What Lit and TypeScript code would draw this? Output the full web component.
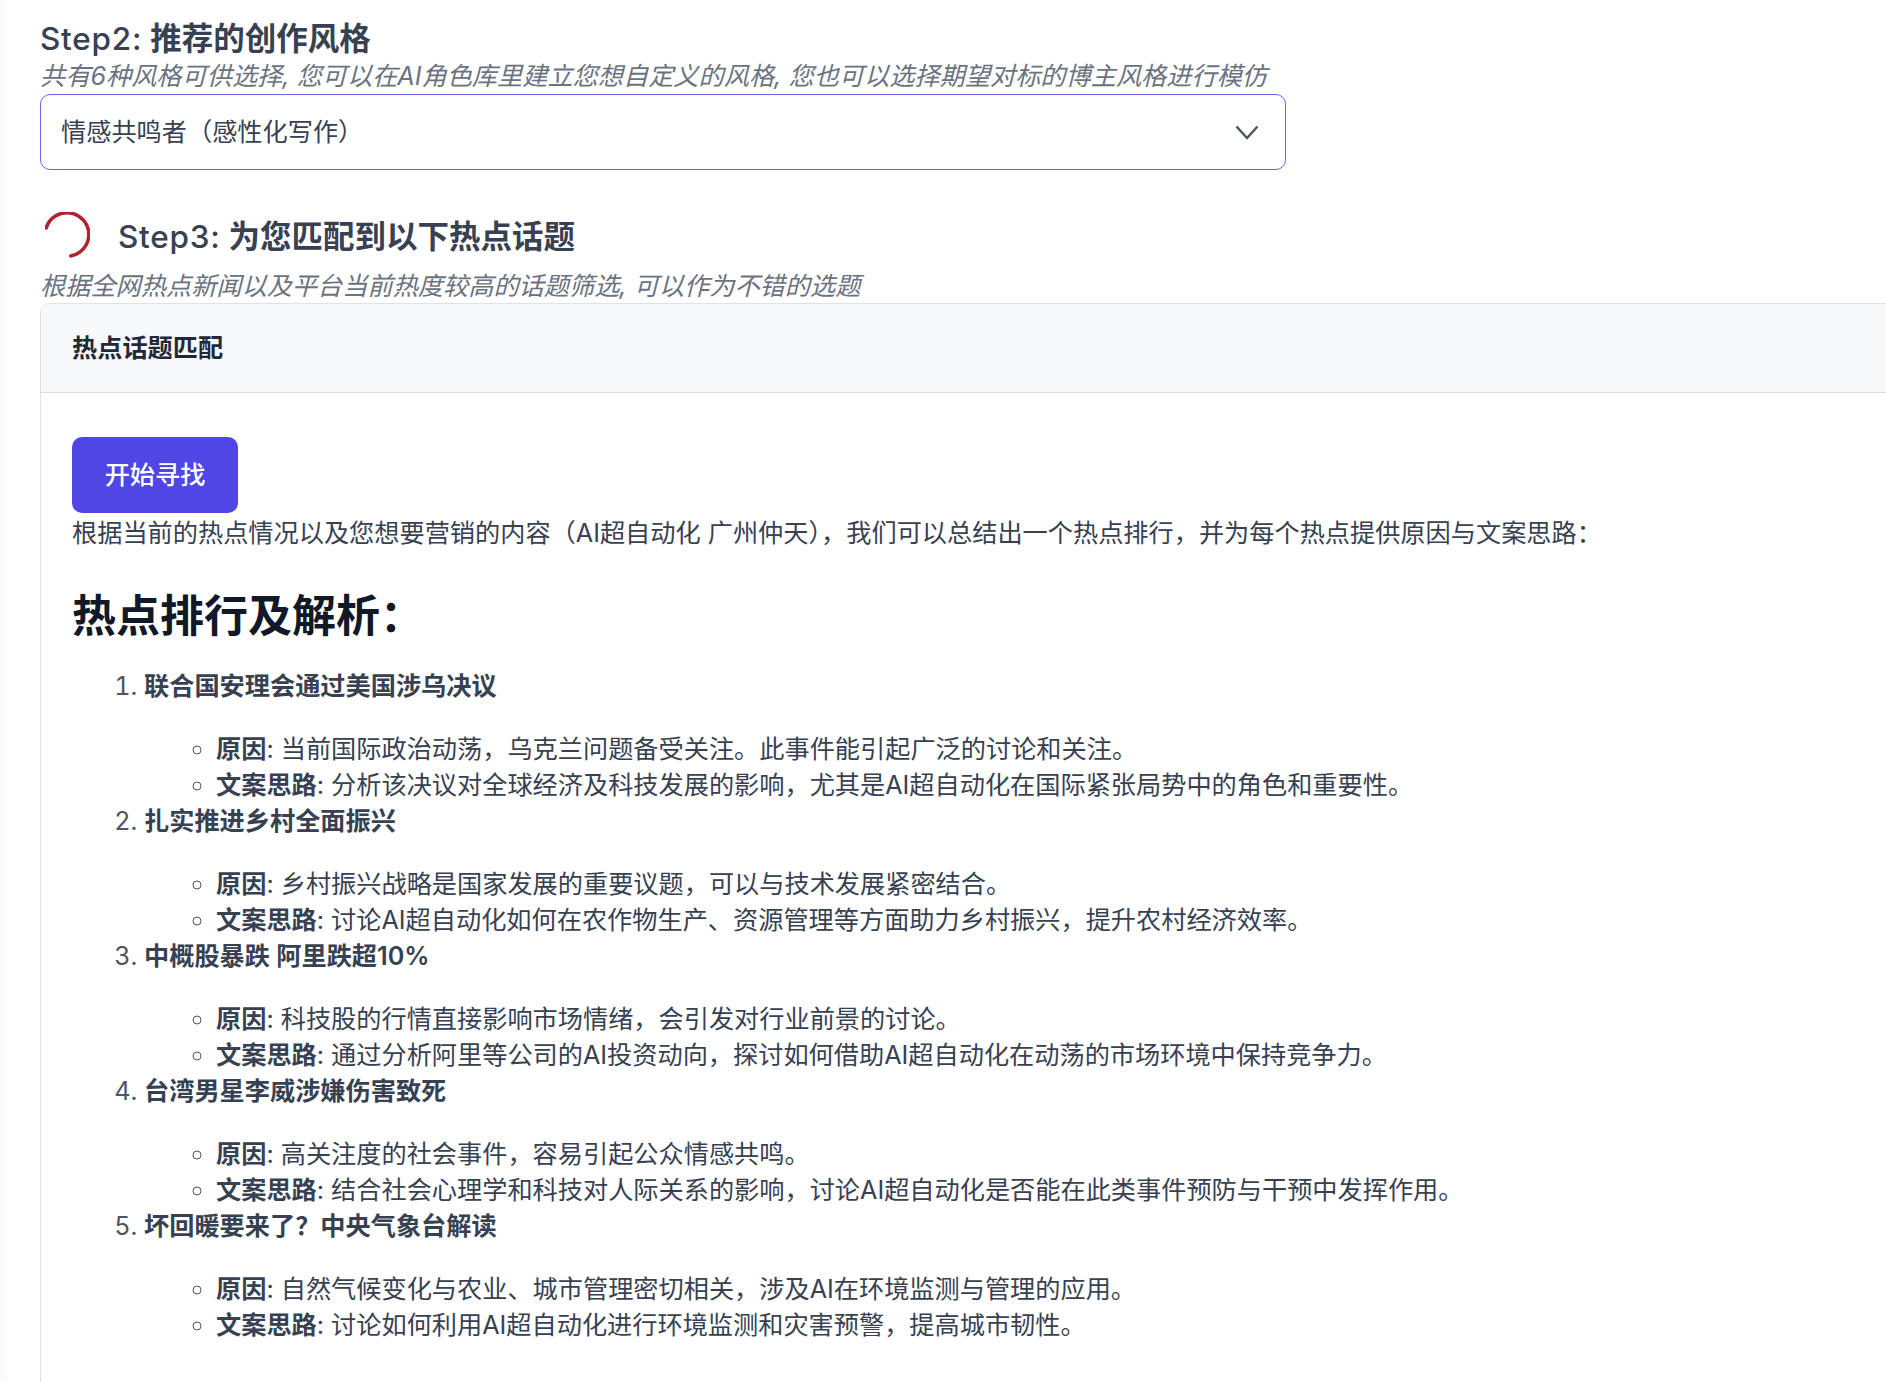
import { LitElement, html, css } from "lit";
import { customElement } from "lit/decorators.js";

const topics = [
  {
    title: "联合国安理会通过美国涉乌决议",
    reason: "当前国际政治动荡，乌克兰问题备受关注。此事件能引起广泛的讨论和关注。",
    idea: "分析该决议对全球经济及科技发展的影响，尤其是AI超自动化在国际紧张局势中的角色和重要性。",
  },
  {
    title: "扎实推进乡村全面振兴",
    reason: "乡村振兴战略是国家发展的重要议题，可以与技术发展紧密结合。",
    idea: "讨论AI超自动化如何在农作物生产、资源管理等方面助力乡村振兴，提升农村经济效率。",
  },
  {
    title: "中概股暴跌 阿里跌超10%",
    reason: "科技股的行情直接影响市场情绪，会引发对行业前景的讨论。",
    idea: "通过分析阿里等公司的AI投资动向，探讨如何借助AI超自动化在动荡的市场环境中保持竞争力。",
  },
  {
    title: "台湾男星李威涉嫌伤害致死",
    reason: "高关注度的社会事件，容易引起公众情感共鸣。",
    idea: "结合社会心理学和科技对人际关系的影响，讨论AI超自动化是否能在此类事件预防与干预中发挥作用。",
  },
  {
    title: "坏回暖要来了？中央气象台解读",
    reason: "自然气候变化与农业、城市管理密切相关，涉及AI在环境监测与管理的应用。",
    idea: "讨论如何利用AI超自动化进行环境监测和灾害预警，提高城市韧性。",
  },
];

@customElement("app-root")
export class AppRoot extends LitElement {
  static styles = css`
    :host {
      display: block;
      height: 1382px;
      overflow: hidden;
      background: linear-gradient(to right, #fcfcfc 7px, #fff 7px);
      font-family: Inter, "Noto Sans CJK SC", sans-serif;
      font-size: 25.2px;
      line-height: 36px;
      color: #374151;
    }
    .page {
      padding: 18px 0 0 40px;
    }
    .step-title {
      margin: 0;
      font-size: 31.5px;
      line-height: 42px;
      font-weight: 600;
      color: #374151;
    }
    .step-title span {
      font-weight: 500;
      letter-spacing: 0.75px;
    }
    .hint {
      margin: -2px 0 0;
      font-style: italic;
      color: #6b7280;
    }
    .select {
      width: 1246px;
      height: 76px;
      box-sizing: border-box;
      border: 1px solid #6366f1;
      border-radius: 10px;
      padding: 0 26px 0 20px;
      display: flex;
      align-items: center;
      justify-content: space-between;
    }
    .step3 {
      margin-top: 42px;
      display: flex;
      align-items: flex-start;
      gap: 28px;
      padding-left: 5px;
    }
    .step3 .step-title {
      margin-top: 4px;
    }
    .spinner {
      width: 45px;
      height: 46px;
      display: block;
    }
    .step3 + .hint {
      margin-top: 10px;
    }
    .card {
      width: 1900px;
      height: 1100px;
      margin-top: -1px;
      border: 1px solid #e0e2e7;
      border-radius: 10px 0 0 0;
    }
    .card-head {
      height: 88px;
      padding-left: 31px;
      display: flex;
      align-items: center;
      background: #f7f8fa;
      border-bottom: 1px solid #d9dce1;
      border-radius: 10px 0 0 0;
      font-weight: 600;
      color: #1f2937;
    }
    .card-body {
      padding: 44px 0 0 31px;
    }
    button {
      display: block;
      width: 166px;
      height: 76px;
      border: 0;
      border-radius: 10px;
      background: #4f46e5;
      color: #fff;
      font: inherit;
      font-weight: 500;
    }
    .intro {
      margin: 2px 0 0;
    }
    h2 {
      margin: 35px 0 0;
      font-size: 44px;
      line-height: 60px;
      font-weight: 600;
      color: #111827;
    }
    ol {
      margin: 22px 0 0;
      padding-left: 72px;
    }
    ul {
      margin: 27px 0 0;
      padding-left: 72px;
      list-style: circle;
    }
    li::marker {
      color: #4b5563;
    }
    strong {
      font-weight: 600;
    }
  `;

  render() {
    return html`
      <div class="page">
        <h3 class="step-title"><span>Step2:</span> 推荐的创作风格</h3>
        <p class="hint">共有6种风格可供选择, 您可以在AI角色库里建立您想自定义的风格, 您也可以选择期望对标的博主风格进行模仿</p>
        <div class="select">
          <span>情感共鸣者（感性化写作）</span>
          <svg width="24" height="24" viewBox="0 0 24 24" fill="none" stroke="#4b5563" stroke-width="2.5">
            <path d="M1.500 6.500L12 18L22.500 6.500" />
          </svg>
        </div>
        <div class="step3">
          <svg class="spinner" viewBox="0 0 45 46" fill="none" stroke="#b3202f" stroke-width="3.500" stroke-linecap="round">
            <path d="M1.200 16A21.800 21.800 0 1 1 25.700 44" />
          </svg>
          <h3 class="step-title"><span>Step3:</span> 为您匹配到以下热点话题</h3>
        </div>
        <p class="hint">根据全网热点新闻以及平台当前热度较高的话题筛选, 可以作为不错的选题</p>
        <div class="card">
          <div class="card-head">热点话题匹配</div>
          <div class="card-body">
            <button>开始寻找</button>
            <p class="intro">根据当前的热点情况以及您想要营销的内容（AI超自动化 广州仲天），我们可以总结出一个热点排行，并为每个热点提供原因与文案思路：</p>
            <h2>热点排行及解析：</h2>
            <ol>
              ${topics.map(
                (t) => html`<li>
                  <strong>${t.title}</strong>
                  <ul>
                    <li><strong>原因</strong>: ${t.reason}</li>
                    <li><strong>文案思路</strong>: ${t.idea}</li>
                  </ul>
                </li>`
              )}
            </ol>
          </div>
        </div>
      </div>
    `;
  }
}
